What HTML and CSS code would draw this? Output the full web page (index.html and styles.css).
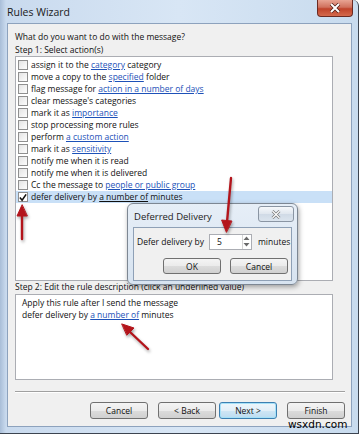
FILE: index.html
```html
<!DOCTYPE html>
<html lang="en">
<head>
  <meta charset="utf-8" />
  <title>Rules Wizard</title>
  <link rel="stylesheet" href="styles.css">
</head>
<body>
  <div class="window">
    <div class="titlebar">
      <span class="title">Rules Wizard</span>
      <button class="close-btn">
        <svg width="12" height="10" viewBox="0 0 12 10"><path d="M2 1 L10 9 M10 1 L2 9" stroke="#4a1a14" stroke-width="3.4"/><path d="M2 1 L10 9 M10 1 L2 9" stroke="#fff" stroke-width="2"/></svg>
      </button>
    </div>
    <div class="client">
      <div class="prompt">What do you want to do with the message?</div>
      <div class="step">Step 1: Select action(s)</div>
      <div class="listbox">
        <div class="item"><span class="check"></span><span>assign it to the <a>category</a> category</span></div>
        <div class="item"><span class="check"></span><span>move a copy to the <a>specified</a> folder</span></div>
        <div class="item"><span class="check"></span><span>flag message for <a>action in a number of days</a></span></div>
        <div class="item"><span class="check"></span><span>clear message's categories</span></div>
        <div class="item"><span class="check"></span><span>mark it as <a>importance</a></span></div>
        <div class="item"><span class="check"></span><span>stop processing more rules</span></div>
        <div class="item"><span class="check"></span><span>perform <a>a custom action</a></span></div>
        <div class="item"><span class="check"></span><span>mark it as <a>sensitivity</a></span></div>
        <div class="item"><span class="check"></span><span>notify me when it is read</span></div>
        <div class="item"><span class="check"></span><span>notify me when it is delivered</span></div>
        <div class="item"><span class="check"></span><span>Cc the message to <a>people or public group</a></span></div>
        <div class="item selected"><span class="check checked">
          <svg width="9" height="9" viewBox="0 0 9 9"><path d="M1 4.5 L3.5 7.5 L8 1" fill="none" stroke="#111" stroke-width="1.8"/></svg>
        </span><span>defer delivery by <a class="plain">a number of</a> minutes</span></div>
      </div>
      <div class="step">Step 2: Edit the rule description (click an underlined value)</div>
      <div class="descbox">
        <div>Apply this rule after I send the message</div>
        <div>defer delivery by <a>a number of</a> minutes</div>
      </div>
      <div class="separator"></div>
      <div class="buttons">
        <button class="btn">Cancel</button>
        <button class="btn back">&lt; Back</button>
        <button class="btn focused">Next &gt;</button>
        <button class="btn finish">Finish</button>
      </div>
    </div>

    <div class="dialog">
      <div class="dlg-title">
        <span>Deferred Delivery</span>
        <button class="dlg-close">
          <svg width="10" height="9" viewBox="0 0 10 9"><path d="M1.5 1 L8.5 8 M8.5 1 L1.5 8" stroke="#777" stroke-width="2.6"/><path d="M1.5 1 L8.5 8 M8.5 1 L1.5 8" stroke="#fff" stroke-width="1.2"/></svg>
        </button>
      </div>
      <div class="dlg-body">
        <div class="dlg-row">
          <span class="dlg-label">Defer delivery by</span>
          <div class="spinner">
            <span class="spin-value">5</span>
            <span class="spin-arrows">
              <svg width="7" height="13" viewBox="0 0 7 13"><path d="M0.5 5 L3.5 1.5 L6.5 5 Z M0.5 8 L3.5 11.5 L6.5 8 Z" fill="#6a6a6a"/></svg>
            </span>
          </div>
          <span>minutes</span>
        </div>
        <div class="dlg-buttons">
          <button class="btn dlg-btn">OK</button>
          <button class="btn dlg-btn">Cancel</button>
        </div>
      </div>
    </div>

    <svg class="arrows" width="360" height="435" viewBox="0 0 360 435">
      <g stroke="#b3141b" stroke-width="2.4" fill="#b3141b" stroke-linecap="round">
        <path d="M22 239 L22 213"/>
        <path d="M22 205 L17 216 L27 216 Z" stroke-width="1"/>
        <path d="M231 178 L227 222"/>
        <path d="M226.3 232 L221.6 220 L231.6 221 Z" stroke-width="1"/>
        <path d="M148 349 L130 332"/>
        <path d="M122 324 L134 328 L127 335 Z" stroke-width="1"/>
      </g>
    </svg>

    <div class="watermark">wsxdn.com</div>
  </div>
</body>
</html>
```

FILE: styles.css
```css
* {
  box-sizing: border-box;
}
body {
  margin: 0;
  background: #fff;
  font-family: 'Open Sans', sans-serif;
  font-size: 8.5px;
  color: #111;
}
button {
  font-family: inherit;
  font-size: inherit;
  color: #111;
}
.window {
  position: relative;
  width: 359px;
  height: 434px;
  padding: 0 6px 6px 7px;
  display: flex;
  flex-direction: column;
  background: linear-gradient(90deg, #a9bed8 0px, #c9daee 6px, #d8e6f5 50%, #c8dbee 100%);
  border-right: 1px solid #3c4450;
  border-bottom: 1px solid #3c4450;
  border-radius: 0 6px 0 0;
}
.titlebar {
  height: 23px;
  flex: none;
  display: flex;
  align-items: flex-start;
  justify-content: space-between;
}
.title {
  font-size: 10.5px;
  margin-top: 5px;
  color: #1a1a1a;
}
.close-btn {
  flex: none;
  width: 36px;
  height: 17px;
  margin-right: -1px;
  padding: 0;
  border: 1px solid #6b2a22;
  border-top: none;
  border-radius: 0 0 4px 4px;
  background: linear-gradient(#e8a493, #d0715d 45%, #c0432b 55%, #d46a4c);
  display: flex;
  align-items: center;
  justify-content: center;
}
.client {
  flex: 1;
  background: #f0f0f0;
  border: 1px solid #8da2bd;
  padding: 6px 6px 0 7px;
}
.prompt {
  line-height: 14px;
}
.step {
  line-height: 12px;
  white-space: nowrap;
}
.listbox {
  width: 318px;
  height: 225px;
  background: #fff;
  border: 1px solid #abadb3;
  padding: 2px 0 0 2px;
}
.item {
  height: 12px;
  line-height: 12px;
  display: flex;
  align-items: center;
  white-space: nowrap;
}
.item.selected {
  background: #c9e0f7;
  margin-left: -2px;
  padding-left: 2px;
}
.check {
  flex: none;
  width: 10px;
  height: 10px;
  margin-right: 3px;
  border: 1px solid #8f8f8f;
  background: linear-gradient(135deg, #e4e4e4, #fdfdfd);
  display: flex;
  align-items: center;
  justify-content: center;
}
.check.checked {
  background: #fff;
}
a {
  color: #1d51b8;
  text-decoration: underline;
}
a.plain {
  color: #111;
}
.descbox {
  width: 318px;
  height: 86px;
  margin-top: 1px;
  background: #fff;
  border: 1px solid #abadb3;
  padding: 2px 6px;
  line-height: 12px;
}
.separator {
  margin-top: 11px;
  border-top: 1px solid #a0a0a0;
  border-bottom: 1px solid #fff;
}
.buttons {
  margin-top: 9px;
  display: flex;
  justify-content: flex-end;
}
.btn {
  width: 58px;
  height: 17px;
  padding: 0;
  border: 1px solid #707070;
  border-radius: 3px;
  background: linear-gradient(#f4f4f4, #ebebeb 50%, #dcdcdc 51%, #d0d0d0);
}
.back {
  margin-left: 10px;
}
.focused {
  margin-left: 3px;
  border-color: #3c7fb1;
  box-shadow: inset 0 0 0 1px #a6e1f8;
  background: linear-gradient(#eef6fb, #e2eff8 50%, #cfe6f5 51%, #bcdcf0);
}
.finish {
  margin-left: 10px;
}
.dialog {
  position: absolute;
  left: 127px;
  top: 203px;
  width: 171px;
  height: 82px;
  padding: 0 5px 5px 5px;
  background: linear-gradient(#e6eef7, #d7e3f0);
  border: 1px solid #7d8793;
  border-radius: 6px;
  box-shadow: 1px 2px 5px rgba(0, 0, 0, 0.35);
}
.dlg-title {
  height: 23px;
  display: flex;
  justify-content: space-between;
  align-items: flex-start;
}
.dlg-title span {
  font-size: 9.5px;
  margin-top: 6px;
  margin-left: 1px;
  color: #222;
}
.dlg-close {
  width: 36px;
  height: 16px;
  margin-top: 2px;
  margin-right: -2px;
  padding: 0;
  border: 1px solid #8a95a3;
  border-radius: 3px;
  background: linear-gradient(#f6f8fb, #dfe6ee 50%, #d0dae6 51%, #dbe4ee);
  display: flex;
  align-items: center;
  justify-content: center;
}
.dlg-body {
  height: 54px;
  background: #f0f0f0;
  border: 1px solid #8ea0b6;
  padding: 5px 3px 0 3px;
}
.dlg-row {
  display: flex;
  align-items: center;
  height: 17px;
  white-space: nowrap;
}
.dlg-label {
  flex: none;
}
.spinner {
  flex: none;
  width: 43px;
  height: 16px;
  margin: 0 6px 0 5px;
  background: #fff;
  border: 1px solid #abadb3;
  display: flex;
  align-items: center;
  justify-content: space-between;
}
.spin-value {
  padding-left: 7px;
}
.spin-arrows {
  width: 9px;
  height: 14px;
  border-left: 1px solid #d5d5d5;
  display: flex;
  align-items: center;
  justify-content: center;
}
.dlg-buttons {
  margin-top: 8px;
  display: flex;
  justify-content: flex-end;
  gap: 9px;
}
.dlg-btn {
  width: 58px;
  height: 16px;
}
.arrows {
  position: absolute;
  left: 0;
  top: 0;
  pointer-events: none;
  filter: drop-shadow(1px 2px 1.5px rgba(0, 0, 0, 0.35));
}
.watermark {
  position: absolute;
  left: 288px;
  top: 418px;
  font-family: 'DejaVu Sans', sans-serif;
  font-size: 10.5px;
  line-height: 12px;
  color: #000;
}
```
